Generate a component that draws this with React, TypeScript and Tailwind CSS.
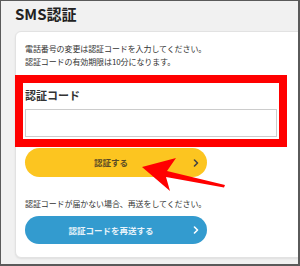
import React from "react";

const Chevron = ({ color }: { color: string }) => (
  <svg width="6" height="8" viewBox="0 0 6 8" className="shrink-0">
    <path d="M1.5 1 L4.5 4 L1.5 7" fill="none" stroke={color} strokeWidth="1.6" strokeLinecap="round" strokeLinejoin="round" />
  </svg>
);

export default function App() {
  return (
    <div
      className="relative w-[300px] h-[266px] overflow-hidden bg-[#f1f1f1] border-t border-l border-r-2 border-b-2 border-[#5a5a5a] text-[#333]"
      style={{ fontFamily: '"Noto Sans CJK JP", "Noto Sans", sans-serif' }}
    >
      <div className="ml-[14px] mt-[3px] h-[20px] leading-[20px] text-[15px] font-bold text-[#222]">SMS認証</div>
      <div className="ml-[14px] mt-[7px] w-[300px] bg-white border border-[#e2e2e2] rounded-[6px] shadow-[0_1px_2px_rgba(0,0,0,0.08)] pl-[9px] pt-[10px] pb-[13px]">
        <div className="text-[8px] leading-[13px] tracking-[-0.1px]">
          <div>電話番号の変更は認証コードを入力してください。</div>
          <div>認証コードの有効期限は10分になります。</div>
        </div>
        <div className="-ml-[10px] mt-[7px] w-[272px] border-[8px] border-[#ff0000] px-[2px] pt-[4px] pb-[2px]">
          <div className="h-[16px] leading-[16px] text-[11px] font-bold text-[#333]">認証コード</div>
          <div className="mt-[6px] h-[28px] border border-[#cccccc] bg-white"></div>
        </div>
        <div className="mt-[1px] w-[182px] h-[29px] rounded-full bg-[#fcc520] flex items-center pl-[4px]">
          <span className="flex-1 text-center text-[8.5px] font-bold text-[#5a4b25]">認証する</span>
          <span className="mr-[8px]"><Chevron color="#444" /></span>
        </div>
        <div className="mt-[20px] text-[8px] leading-[13px] tracking-[-0.1px]">認証コードが届かない場合、再送をしてください。</div>
        <div className="mt-[6px] w-[182px] h-[28px] rounded-full bg-[#339bcf] flex items-center pl-[4px]">
          <span className="flex-1 text-center text-[8.5px] font-bold text-[#e8f3fa]">認証コードを再送する</span>
          <span className="mr-[8px]"><Chevron color="#ffffff" /></span>
        </div>
      </div>
      <svg
        className="absolute left-[-1px] top-[-1px] pointer-events-none"
        width="300"
        height="266"
        viewBox="0 0 300 266"
      >
        <polygon
          points="142,167 176,158 167,171 225,185 224,187.5 166,177 170,191"
          fill="#ff0000"
        />
      </svg>
    </div>
  );
}
